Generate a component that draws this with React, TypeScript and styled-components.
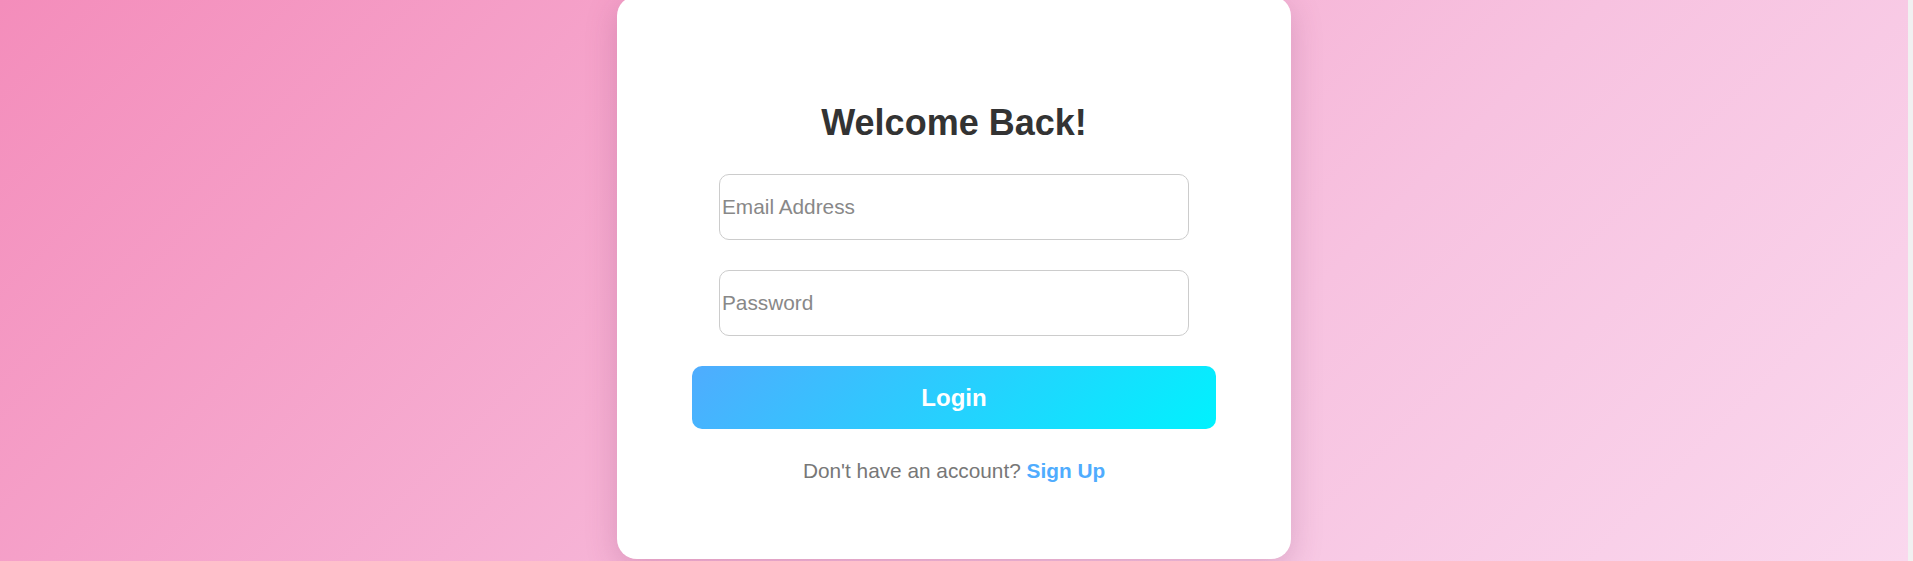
import { FC } from "react";
import styled, { createGlobalStyle } from "styled-components";

const GlobalStyle = createGlobalStyle`
  html {
    background: #f1f1f1;
  }

  body {
    margin: 0;
    font-family: "Liberation Sans", Arial, sans-serif;
    overflow: hidden;
  }

  * {
    box-sizing: border-box;
  }
`;

export const LoginCard: FC<{
  onLogin?: () => void;
}> = ({ onLogin = () => {} }) => {
  return (
    <Card>
      <Title>Welcome Back!</Title>
      <Field type="email" placeholder="Email Address" />
      <Field type="password" placeholder="Password" />
      <LoginButton onClick={onLogin}>Login</LoginButton>
      <Footer>
        Don't have an account? <SignUp href="#">Sign Up</SignUp>
      </Footer>
    </Card>
  );
};

export default function App() {
  return (
    <>
      <GlobalStyle />
      <Page>
        <LoginCard />
      </Page>
    </>
  );
}

const Page = styled.div`
  display: flex;
  justify-content: center;
  align-items: flex-start;
  height: 100vh;
  margin-right: 5px;
  background: linear-gradient(135deg, #f48dbb 0%, #f7c2e0 65%, #fad8ee 100%);
  overflow: hidden;
`;

const Card = styled.div`
  display: flex;
  flex-direction: column;
  align-items: center;
  gap: 30px;
  width: 674px;
  margin-top: -4px;
  padding: 75px 75px 76px;
  background: #fff;
  border-radius: 20px;
  box-shadow: 0 8px 32px rgba(120, 40, 90, 0.22);
`;

const Title = styled.h2`
  margin: 31px 0 0;
  font-size: 36px;
  font-weight: 700;
  color: #333;
`;

const Field = styled.input`
  width: 470px;
  height: 66px;
  padding: 0 2px;
  border: 1px solid #ccc;
  border-radius: 10px;
  font-family: "Liberation Sans", Arial, sans-serif;
  font-size: 20.8px;
  color: #333;
  outline: none;

  &::placeholder {
    color: #888;
  }
`;

const LoginButton = styled.button`
  width: 524px;
  height: 63px;
  border: none;
  border-radius: 10px;
  background: linear-gradient(135deg, #4facfe 0%, #00f2fe 100%);
  color: #fff;
  font-family: "Liberation Sans", Arial, sans-serif;
  font-size: 24px;
  font-weight: 700;
  cursor: pointer;
`;

const Footer = styled.p`
  margin: 0;
  font-size: 20.8px;
  color: #777;
`;

const SignUp = styled.a`
  color: #4facfe;
  font-weight: 700;
  text-decoration: none;
`;
